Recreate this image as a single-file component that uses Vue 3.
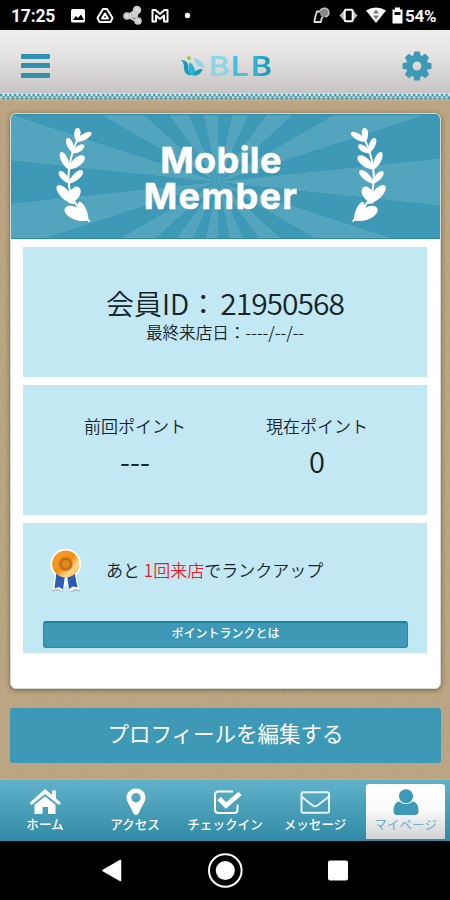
<template>
  <div class="screen">
    <div class="status-bar">
      <span class="clock">17:25</span>
      <svg class="status-left" width="125" height="30" viewBox="70 0 125 30">
        <rect x="71" y="9" width="14" height="13.500" rx="1.500" fill="#fff" />
        <path d="M73 20l3-4 2 2 3-3.500 3 5.500z" fill="#000" />
        <g fill="none" stroke="#fff" stroke-width="2" stroke-linejoin="round">
          <path d="M103 9h4l5.500 9-2 4h-11l-2-4z" />
          <path d="M105 13.500l3 5h-6z" />
          <path d="M152.500 21.500v-11.500h3l4.500 4 4.500-4h3v11.500h-3.500v-6l-4 3.500-4-3.500v6z" />
        </g>
        <g fill="#ddd" stroke="#ccc" stroke-width="2.500">
          <path d="M138 9l-11 7 11 6M127 16l8 0" fill="none" />
          <circle cx="137" cy="10" r="3" />
          <circle cx="127" cy="16" r="2.500" />
          <circle cx="138" cy="21" r="2.500" />
          <circle cx="135" cy="15" r="2" />
        </g>
        <circle cx="187.500" cy="15.500" r="2.700" fill="#fff" />
      </svg>
      <svg class="status-right" width="92" height="30" viewBox="312 0 92 30">
        <path d="M320 11.500h-3l-1.500 4.500-1.200 6h6.500l1-4 2.200-3" fill="none" stroke="#ddd" stroke-width="1.800" stroke-linejoin="round" />
        <circle cx="324.500" cy="12.500" r="4.800" fill="#888" />
        <path d="M320 10.500c2-3 7-3 8.500.5 1 3-.5 5-3 6" fill="none" stroke="#bbb" stroke-width="1.600" />
        <path d="M344 10.500v10l-4.500-5zM353 10.500v10l4.500-5z" fill="#bbb" />
        <rect x="344.700" y="9.700" width="8" height="11.600" rx="1.500" fill="#000" stroke="#fff" stroke-width="2" />
        <path d="M366 10.500q10-6 20 0l-10 12.500z" fill="#fff" />
        <path d="M373 13.500l3-4 3 4zM373 15.500l3 4 3-4z" fill="#777" />
        <path d="M392.500 9.500h2.500v-2h5v2h2.500v14h-10z" fill="#fff" />
        <path d="M394.500 12h6v3h-6z" fill="#111" />
      </svg>
      <span class="battery">54%</span>
    </div>

    <header class="header">
      <div class="burger"><i></i><i></i><i></i></div>
      <div class="logo">
        <svg width="26" height="22" viewBox="180 55 26 22">
          <path d="M180.500 60c6 0 8 3 7.500 7 0 3 1 5 4.500 8-5 1-8.500-2-8.500-7 0-4-.5-6-3.500-8z" fill="#189abb" />
          <path d="M190 62c-3 5-2 10 3.500 14 3.500-5 1-9-3.500-14z" fill="#2cb2d2" />
          <path d="M193.500 58c6 1 10.500 5 11 10-5 .5-9.500-4-11-10z" fill="#8ed6e9" />
          <path d="M194 75.500c0-4 2.500-6.500 8.500-6.500-1 4-4 6.500-8.500 6.500z" fill="#1c98ba" />
          <circle cx="189" cy="58" r="2" fill="#9acb45" />
        </svg>
        <span class="logo-text"><b class="b1">B</b><b class="l">L</b><b class="b2">B</b></span>
      </div>
      <svg class="gear" width="30" height="30" viewBox="-15 -15 30 30">
        <g fill="#3d99b6">
          <path v-for="a in gearAngles" :key="a" d="M-4-9l1.300-5.500h5.400l1.300 5.500z" :transform="`rotate(${a})`" />
        </g>
        <circle r="7.700" fill="none" stroke="#3d99b6" stroke-width="6.500" />
      </svg>
    </header>
    <svg class="zigzag" width="450" height="8">
      <defs>
        <pattern id="zig" width="4.640" height="8" patternUnits="userSpaceOnUse">
          <rect width="4.640" height="5" fill="#dde4e3" />
          <rect y="5" width="4.640" height="3" fill="#bfb192" />
          <path d="M0 .8h2.300v2.400h2.340v2.600l-1.200 1.200-1.200-1.200v-2.400h-2.240z" fill="#3f9cb8" />
        </pattern>
      </defs>
      <rect width="450" height="8" fill="url(#zig)" />
    </svg>

    <main class="content">
      <svg class="grain" width="450" height="678">
        <filter id="grain">
          <feTurbulence type="fractalNoise" baseFrequency="0.3" numOctaves="3" seed="4" />
          <feColorMatrix values="0 0 0 0 0.4  0 0 0 0 0.3  0 0 0 0 0.16  0.5 0 0 0 -0.17" />
        </filter>
        <rect width="450" height="678" filter="url(#grain)" />
      </svg>

      <section class="card">
        <div class="banner">
          <svg class="laurel" viewBox="164 78 112 290">
            <path :d="stem" class="stem" />
            <path v-for="(l, i) in leaves" :key="i" :d="leafPath(l)" />
          </svg>
          <h1><span class="mobile">Mobile</span><span class="member">Member</span></h1>
          <svg class="laurel flip" viewBox="164 78 112 290">
            <path :d="stem" class="stem" />
            <path v-for="(l, i) in leaves" :key="i" :d="leafPath(l)" />
          </svg>
        </div>

        <div class="panels">
          <div class="panel member-panel">
            <div class="member-id">会員ID：<span>{{ memberId }}</span></div>
            <div class="last-visit">最終来店日：----/--/--</div>
          </div>
          <div class="panel points">
            <div v-for="p in points" :key="p.label" class="point">
              <div class="point-label">{{ p.label }}</div>
              <div class="point-value">{{ p.value }}</div>
            </div>
          </div>
          <div class="panel rank">
            <div class="rank-row">
              <svg class="medal" width="34" height="48" viewBox="49 546 34 48">
                <defs>
                  <linearGradient id="gold" x1="0" y1="0" x2="1" y2="1">
                    <stop offset="0" stop-color="#f7a02b" />
                    <stop offset=".5" stop-color="#f19118" />
                    <stop offset=".72" stop-color="#ffd98a" />
                    <stop offset="1" stop-color="#ef9a20" />
                  </linearGradient>
                </defs>
                <path d="M52 590.500l4-17h21l3.500 17-5-1-5 2-4.500-7-4 7-4-2z" fill="#8b9ba2" opacity=".6" />
                <path d="M52 589l4-18h20l4 18-5-1-4.500 2.500-4.500-6-4 6-4-2.500z" fill="#fff" />
                <circle cx="65.700" cy="563" r="15.300" fill="#fff" />
                <path d="M56.500 571l8.500 4-2 13.500-4-2.500-4.500 1.500zM67 575l7.500-4 3 15.500-4.500-1-4 2.500z" fill="#2a5db5" />
                <circle cx="65.700" cy="563" r="13.600" fill="url(#gold)" />
                <circle cx="65.700" cy="563" r="7" fill="#c9761a" />
                <circle cx="65.700" cy="563" r="4.500" fill="#e08a1f" stroke="#ba6a18" />
              </svg>
              <p>あと <em>1回来店</em>でランクアップ</p>
            </div>
            <button class="rank-button">ポイントランクとは</button>
          </div>
        </div>
      </section>

      <button class="profile-button">プロフィールを編集する</button>
    </main>

    <nav class="tabs">
      <div v-for="t in tabs" :key="t.id" class="tab" :class="{ active: t.id === 'mypage' }">
        <svg width="34" height="28" viewBox="-17 -15 34 28">
          <g v-if="t.id === 'home'" fill="#fff">
            <path d="M0-13l7 6v-4.500h4v8l5 4.500-2 2L0-8-13.500 3l-2-2z" />
            <path d="M0-5.500l10.500 8.300V12H3V5h-5.500v7h-8V2.800z" />
          </g>
          <path v-else-if="t.id === 'access'" fill="#fff" fill-rule="evenodd"
            d="M1-13.500c5.500 0 9.500 4 9.500 9 0 4-3.500 8-6 14C3.500 12 2.500 13 1 13s-2.500-1-3.500-3.500c-2.500-6-6-10-6-14 0-5 4-9 9.500-9zM1-9a4.700 4.700 0 1 0 0 9.400 4.700 4.700 0 0 0 0-9.400z" />
          <g v-else-if="t.id === 'checkin'" fill="none" stroke="#fff">
            <path d="M8-10.500h-14.500q-3.500 0-3.500 3.500v14.500q0 3.500 3.500 3.500h15.500q3.500 0 3.500-3.500v-5" stroke-width="2" />
            <path d="M-6-3.500l7 7L15-8.500" stroke-width="4.800" />
          </g>
          <g v-else-if="t.id === 'message'" fill="none" stroke="#e5f6fa" stroke-width="2">
            <rect x="-13.500" y="-9.700" width="27.500" height="20.500" rx="2" />
            <path d="M-13-5l10 8q3 2.500 6 0L13.500-5" />
          </g>
          <g v-else fill="#3d99b6">
            <circle cy="-5.800" r="7" />
            <path d="M-7-.5q7 5 14 0 5.500 1 5.500 9.500 0 4-3.500 4h-18q-3.500 0-3.500-4Q-12.500.5-7-.5z" />
          </g>
        </svg>
        <span>{{ t.label }}</span>
      </div>
    </nav>

    <div class="system-nav">
      <svg width="450" height="59" viewBox="0 841 450 59">
        <path d="M103 870.500l17.500-10v20z" fill="#fff" stroke="#fff" stroke-linejoin="round" stroke-width="1.500" />
        <circle cx="225.300" cy="870.500" r="16.300" fill="none" stroke="#fff" stroke-width="2" />
        <circle cx="225.300" cy="870.500" r="9.500" fill="#fff" />
        <rect x="328" y="860.500" width="20" height="20" rx="2" fill="#fff" />
      </svg>
    </div>
  </div>
</template>

<script setup>
const memberId = '21950568'

const points = [
  { label: '前回ポイント', value: '---' },
  { label: '現在ポイント', value: '0' },
]

const tabs = [
  { id: 'home', label: 'ホーム' },
  { id: 'access', label: 'アクセス' },
  { id: 'checkin', label: 'チェックイン' },
  { id: 'message', label: 'メッセージ' },
  { id: 'mypage', label: 'マイページ' },
]

const gearAngles = [0, 45, 90, 135, 180, 225, 270, 315]

const stem = 'M268 362Q235 325 212 285Q200 235 207 200Q213 150 236 108'

// base x, base y, tip x, tip y, half width
const leaves = [
  [230, 124, 232, 80, 15],
  [226, 123, 273, 95, 14],
  [220, 157, 201, 111, 15],
  [216, 157, 251, 132, 14],
  [206, 207, 182, 153, 16],
  [203, 206, 252, 166, 20],
  [208, 248, 177, 211, 15],
  [204, 248, 247, 209, 16],
  [222, 310, 171, 254, 22],
  [206, 308, 235, 258, 24],
  [266, 358, 194, 322, 28],
  [264, 360, 236, 303, 15],
]

function leafPath([bx, by, tx, ty, w]) {
  const dx = tx - bx
  const dy = ty - by
  const len = Math.hypot(dx, dy)
  const nx = (-dy / len) * w
  const ny = (dx / len) * w
  const mx = bx + dx * 0.4
  const my = by + dy * 0.4
  const out = `C${mx + nx} ${my + ny} ${tx + nx * 0.7} ${ty + ny * 0.7} ${tx} ${ty}`
  const back = `C${tx - nx * 0.7} ${ty - ny * 0.7} ${mx - nx} ${my - ny} ${bx} ${by}`
  return `M${bx} ${by}${out}${back}Z`
}
</script>

<style>
body {
  margin: 0;
}
</style>

<style scoped>
.screen {
  width: 450px;
  height: 900px;
  display: flex;
  flex-direction: column;
  overflow: hidden;
  background: #000;
  font-family: "Noto Sans CJK JP", "Noto Sans", sans-serif;
  color: #16242a;
}

svg {
  display: block;
  flex-shrink: 0;
}

button {
  font-family: inherit;
  border: 0;
  padding: 0;
  color: #fff;
}

.status-bar {
  height: 30px;
  flex-shrink: 0;
  display: flex;
  align-items: center;
  padding: 0 9px 0 11px;
  font-family: Roboto, sans-serif;
  font-weight: 700;
  font-size: 17.5px;
  color: #f5f5f5;
}

.clock {
  width: 59px;
  padding-top: 2px;
  letter-spacing: -0.2px;
}

.status-right {
  margin-left: auto;
}

.battery {
  width: 37px;
  padding-top: 2px;
  padding-left: 1px;
  box-sizing: border-box;
  font-size: 17px;
  letter-spacing: -0.3px;
}

.header {
  height: 63px;
  flex-shrink: 0;
  display: flex;
  align-items: center;
  justify-content: space-between;
  padding: 8px 18px 0 21px;
  box-sizing: border-box;
  background: linear-gradient(#f0efed, #e4e3e1 40%, #c6c5c3);
}

.burger {
  width: 29px;
  display: flex;
  flex-direction: column;
  gap: 4.5px;
}

.burger i {
  height: 5px;
  border-radius: 1px;
  background: #2f91ae;
}

.logo {
  display: flex;
  align-items: center;
  margin-left: 2px;
}

.logo-text {
  display: flex;
  margin-left: 3px;
  width: 66px;
  font-family: Inter, sans-serif;
  font-size: 26.5px;
  line-height: 22px;
}

.logo-text b {
  font-weight: 600;
  width: 22px;
  transform: scaleX(1.2);
  transform-origin: 0 50%;
}

.b1 {
  color: #8fd5e8;
}

.l {
  color: #45bfdc;
}

.logo-text .b2 {
  margin-left: -2px;
  background: linear-gradient(90deg, #38b9d8, #1687a9);
  background-clip: text;
  color: transparent;
}

.content {
  position: relative;
  height: 678px;
  flex-shrink: 0;
  box-sizing: border-box;
  padding: 12px 9px 0 10px;
  background: #bda684;
}

.grain {
  position: absolute;
  left: 0;
  top: 0;
}

.card {
  position: relative;
  height: 576px;
  box-sizing: border-box;
  border: 1px solid #cfdcd8;
  border-radius: 6px;
  background: #fff;
  box-shadow: 0 1px 5px rgba(70, 50, 20, 0.6);
  overflow: hidden;
}

.banner {
  height: 125px;
  box-sizing: border-box;
  display: flex;
  justify-content: space-between;
  align-items: flex-start;
  padding: 12px 53px 0 44px;
  background: repeating-conic-gradient(from 84deg at 207px 67px, #52a5bd 0 12deg, #3d99b6 12deg 24deg);
  border-top: 1px solid #2c8ca9;
  border-bottom: 1px solid #2c8ca9;
}

.laurel {
  width: 37.3px;
  height: 96.7px;
  fill: #fff;
}

.stem {
  fill: none;
  stroke: #fff;
  stroke-width: 6;
}

.flip {
  transform: scaleX(-1);
}

h1 {
  margin: 15px 0 0;
  width: 170px;
  display: flex;
  flex-direction: column;
  align-items: center;
  font: 700 36px/36px Inter, sans-serif;
  color: #fff;
  -webkit-text-stroke: 0.5px #fff;
}

.mobile {
  letter-spacing: 0.4px;
}

.member {
  letter-spacing: 1.3px;
}

.panels {
  padding: 8px 13px 0 12px;
  display: flex;
  flex-direction: column;
  gap: 8px;
}

.panel {
  height: 130px;
  box-sizing: border-box;
  background: #c2e8f3;
}

.member-panel {
  text-align: center;
  padding-top: 38px;
}

.member-id {
  font-size: 28px;
  line-height: 34px;
  font-weight: 350;
}

.member-id span {
  margin-left: 3px;
  font-size: 30px;
  letter-spacing: -1px;
}

.last-visit {
  font-size: 16.6px;
  line-height: 24px;
  font-weight: 350;
}

.points {
  display: flex;
  padding: 0 19px 0 21px;
  font-weight: 350;
}

.point {
  flex: 1;
  padding-top: 29px;
  text-align: center;
}

.point-label {
  font-size: 17px;
  line-height: 24px;
}

.point-value {
  font-size: 29px;
  line-height: 34px;
  margin-top: 5px;
}

.rank {
  padding: 24px 20px 0;
}

.rank-row {
  display: flex;
  height: 48px;
  align-items: center;
  padding-left: 6px;
}

.rank-row p {
  margin: 0 0 2px 23px;
  font-size: 17px;
  line-height: 24px;
  font-weight: 350;
}

em {
  font-style: normal;
  color: #ee1c2a;
}

.rank-button {
  display: block;
  width: 365px;
  height: 27px;
  margin-top: 26px;
  box-sizing: border-box;
  border: 1px solid #3188a3;
  border-top: 2px solid #1d819d;
  border-radius: 3px;
  padding-bottom: 4px;
  background: #3d99b6;
  font-size: 12px;
  line-height: 20px;
  font-weight: 500;
}

.profile-button {
  position: relative;
  display: block;
  width: 431px;
  height: 55px;
  margin-top: 18.5px;
  border-radius: 3px;
  padding-bottom: 5px;
  background: #3d99b6;
  font-size: 21.5px;
  line-height: 46px;
}

.tabs {
  height: 62px;
  flex-shrink: 0;
  display: flex;
  box-sizing: border-box;
  border-top: 1px solid #9dbb9d;
  background: linear-gradient(#60b2c9, #318aa5);
}

.tab {
  width: 90px;
  display: flex;
  flex-direction: column;
  align-items: center;
  padding: 7px 0 0;
  box-sizing: border-box;
  color: #fff;
  font-size: 12.6px;
  line-height: 18px;
  font-weight: 500;
}

.tab.active {
  width: 79px;
  height: 55px;
  margin: 4px 0 0 6px;
  padding-top: 3px;
  border-radius: 3px 3px 0 0;
  background: linear-gradient(#fff, #fbfbfb 45%, #d3d3d5);
  color: #6fafc2;
  font-weight: 400;
}

.system-nav {
  height: 59px;
  background: #000;
}
</style>
